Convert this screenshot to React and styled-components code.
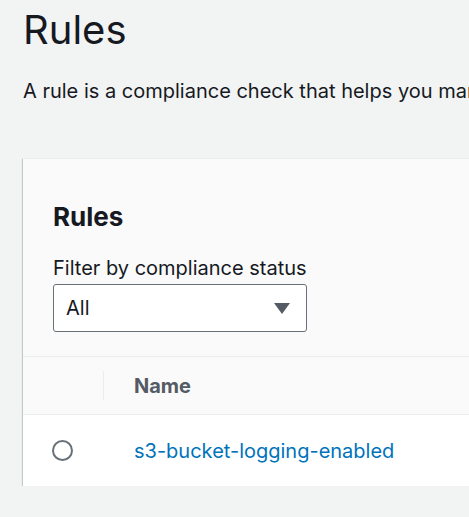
import React from 'react'
import styled, {createGlobalStyle} from 'styled-components'

const GlobalStyle = createGlobalStyle`
  html, body {
    margin: 0;
    padding: 0;
    background: #f2f3f3;
    font-family: Inter, Roboto, "Liberation Sans", Arial, sans-serif;
    color: #16191f;
    overflow: hidden;
  }
`

const Page = styled.div`
  padding: 0 0 0 23px;
  width: 600px;
`

const Title = styled.h1`
  margin: 0;
  padding-top: 4px;
  font-size: 40px;
  line-height: 52px;
  font-weight: 400;
`

const Description = styled.p`
  margin: 21px 0 0;
  font-size: 20px;
  line-height: 28px;
  white-space: nowrap;
`

const Card = styled.div`
  margin-top: 53px;
  background: #fff;
  box-shadow: 0 1px 1px 0 rgba(0, 28, 36, 0.3), 1px 1px 1px 0 rgba(0, 28, 36, 0.15),
    -1px 1px 1px 0 rgba(0, 28, 36, 0.15);
  border-top: 1px solid #eaeded;
`

const CardHeader = styled.div`
  background: #fafafa;
  padding: 40px 30px 24px;
`

const CardTitle = styled.h2`
  margin: 0;
  font-size: 26px;
  line-height: 36px;
  font-weight: 700;
`

const Label = styled.label`
  display: block;
  margin-top: 19px;
  font-size: 20px;
  line-height: 28px;
`

const Select = styled.div`
  margin-top: 2px;
  box-sizing: border-box;
  width: 254px;
  height: 48px;
  border: 1px solid #687078;
  border-radius: 3px;
  background: #fff;
  display: flex;
  align-items: center;
  justify-content: space-between;
  padding: 0 16px 0 12px;
  font-size: 20px;
`

const Caret = styled.span`
  width: 0;
  height: 0;
  border-left: 8px solid transparent;
  border-right: 8px solid transparent;
  border-top: 11px solid #545b64;
`

const Table = styled.div`
  display: grid;
  grid-template-columns: 81px 1fr;
`

const HeadCell = styled.div`
  background: #fafafa;
  border-top: 1px solid #eaeded;
  border-bottom: 1px solid #eaeded;
  height: 57px;
  display: flex;
  align-items: center;
  font-size: 20px;
  font-weight: 700;
  color: #545b64;
  padding-left: ${p => (p.$first ? 0 : '30px')};
  position: relative;
  ${p =>
    p.$first &&
    `
    &::after {
      content: '';
      position: absolute;
      right: 0;
      top: 14px;
      bottom: 14px;
      width: 1px;
      background: #eaeded;
    }
  `}
`

const Cell = styled.div`
  height: 71px;
  display: flex;
  align-items: center;
  justify-content: ${p => (p.$center ? 'center' : 'flex-start')};
  padding-left: ${p => (p.$center ? 0 : '30px')};
  font-size: 20px;
`

const Radio = styled.span`
  box-sizing: border-box;
  width: 21px;
  height: 21px;
  border: 2px solid #687078;
  border-radius: 50%;
  margin-left: -2px;
`

const Link = styled.a`
  color: #0073bb;
  text-decoration: none;
`

export default function App() {
  return (
    <Page>
      <GlobalStyle />
      <Title>Rules</Title>
      <Description>
        A rule is a compliance check that helps you manage your resources.
      </Description>
      <Card>
        <CardHeader>
          <CardTitle>Rules</CardTitle>
          <Label>Filter by compliance status</Label>
          <Select>
            <span>All</span>
            <Caret />
          </Select>
        </CardHeader>
        <Table>
          <HeadCell $first />
          <HeadCell>Name</HeadCell>
          <Cell $center>
            <Radio />
          </Cell>
          <Cell>
            <Link href="#">s3-bucket-logging-enabled</Link>
          </Cell>
        </Table>
      </Card>
    </Page>
  )
}
